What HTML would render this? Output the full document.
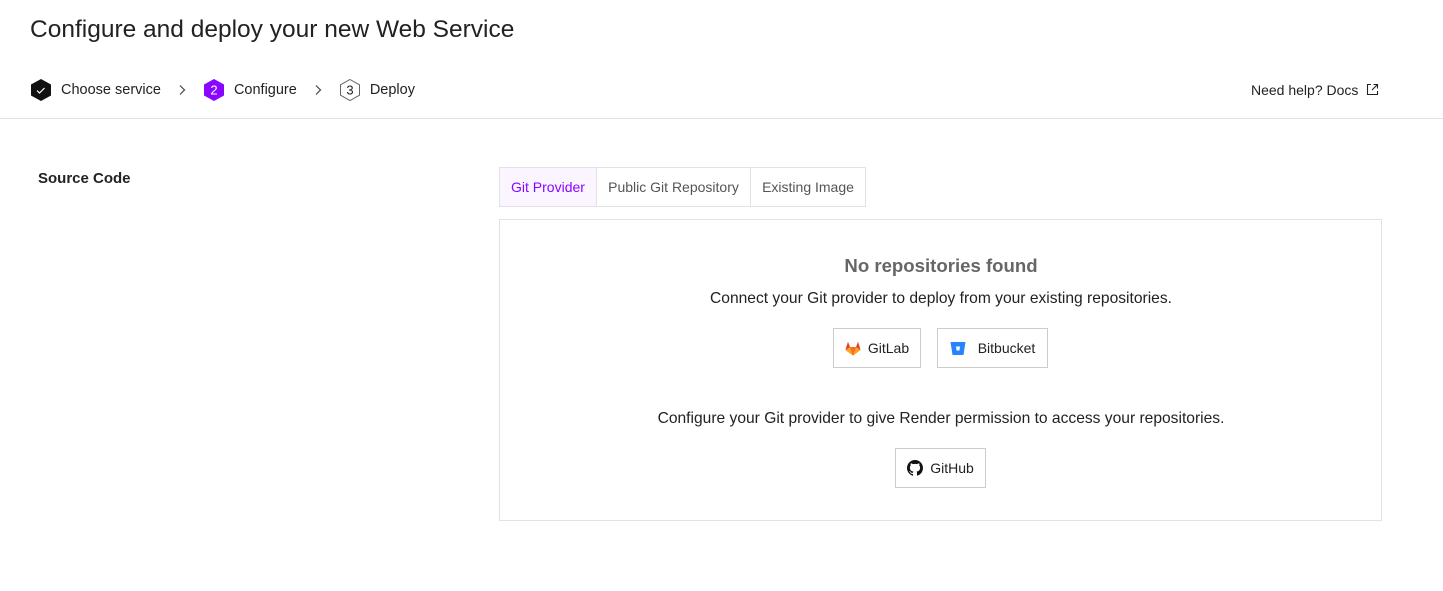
<!DOCTYPE html>
<html><head><meta charset="utf-8"><style>
*{box-sizing:border-box;margin:0;padding:0}
body{width:1443px;height:591px;background:#fff;font-family:"Liberation Sans",sans-serif;color:#1a1a1a;position:relative;overflow:hidden}
.abs{position:absolute}
h1{position:absolute;left:30px;top:16px;font-size:24.5px;font-weight:400;color:#222}
.steps{position:absolute;left:30px;top:78px;height:24px;display:flex;align-items:center;font-size:14.5px;color:#222}
.steps svg{display:block}
.chev{margin:0 17px 0 17px}
.hr{position:absolute;left:0;top:118px;width:1443px;height:1px;background:#e2e2e2}
.tab{position:absolute;top:167px;height:40px;border:1px solid #e2e2e2;font-size:14px;color:#555;display:flex;align-items:center;justify-content:center}
.btn{position:absolute;height:40px;border:1px solid #ccc;display:flex;align-items:center;justify-content:center;font-size:14px;color:#222;gap:7px;background:#fff}
.c{position:absolute;left:500px;width:882px;text-align:center}
</style></head><body>
<h1>Configure and deploy your new Web Service</h1>
<div class="steps">
<svg width="22" height="24" viewBox="0 0 22 24"><polygon points="11,1 21,6.5 21,17.5 11,23 1,17.5 1,6.5" fill="#111"/><path d="M7 12.5l2.5 2.5 5-5" stroke="#fff" stroke-width="1.2" fill="none"/></svg>
<span style="margin-left:9px">Choose service</span>
<svg class="chev" width="8" height="12" viewBox="0 0 8 12"><path d="M2 1.5l4.5 4.5L2 10.5" fill="none" stroke="#444" stroke-width="1.2"/></svg>
<svg width="22" height="24" viewBox="0 0 22 24"><polygon points="11,1 21,6.5 21,17.5 11,23 1,17.5 1,6.5" fill="#8a05ff"/><text x="11" y="16.5" font-size="13" fill="#fff" text-anchor="middle" font-family="Liberation Sans">2</text></svg>
<span style="margin-left:9px">Configure</span>
<svg class="chev" width="8" height="12" viewBox="0 0 8 12"><path d="M2 1.5l4.5 4.5L2 10.5" fill="none" stroke="#444" stroke-width="1.2"/></svg>
<svg width="22" height="24" viewBox="0 0 22 24"><polygon points="11,1.5 20.5,6.8 20.5,17.2 11,22.5 1.5,17.2 1.5,6.8" fill="none" stroke="#666" stroke-width="1"/><text x="11" y="16.5" font-size="13" fill="#222" text-anchor="middle" font-family="Liberation Sans">3</text></svg>
<span style="margin-left:9px">Deploy</span>
</div>
<div class="abs" style="left:1251px;top:82px;font-size:14px;color:#222">Need help? Docs <svg width="13" height="13" viewBox="0 0 13 13" style="margin-left:4px;vertical-align:-1px"><path d="M5 1.5H1.5v10h10V8M7.5 1.5h4v4M11.5 1.5L6 7" fill="none" stroke="#222" stroke-width="1.1"/></svg></div>
<div class="hr"></div>
<div class="abs" style="left:38px;top:170px;font-size:15px;font-weight:700;color:#222">Source Code</div>
<div class="tab" style="left:499px;width:98px;background:#faf5ff;color:#8a05ff">Git Provider</div>
<div class="tab" style="left:596px;width:155px">Public Git Repository</div>
<div class="tab" style="left:750px;width:116px">Existing Image</div>
<div class="abs" style="left:499px;top:219px;width:883px;height:302px;border:1px solid #e2e2e2"></div>
<div class="c" style="top:255px;font-size:18.6px;font-weight:700;color:#666">No repositories found</div>
<div class="c" style="top:290px;font-size:15.6px;color:#222">Connect your Git provider to deploy from your existing repositories.</div>
<div class="btn" style="left:833px;top:328px;width:88px"><svg width="16" height="15" viewBox="0 0 16 15"><path d="M8 14.5L0.5 9 1.3 6 3 .8 5 6h6l2-5.2 1.7 5.2.8 3z" fill="#e24329"/><path d="M8 14.5L5 6h6z" fill="#fc6d26"/><path d="M0.5 9L5 6 8 14.5zM15.5 9L11 6 8 14.5z" fill="#fca326"/></svg>GitLab</div>
<div class="btn" style="left:937px;top:328px;width:111px"><svg width="16" height="15" viewBox="0 0 16 15" style="margin-right:5px"><path d="M0.5 1h15l-2 13h-11z" fill="#2684ff"/><path d="M6 5.5h4l-.6 4H6.6z" fill="#fff"/></svg>Bitbucket</div>
<div class="c" style="top:410px;font-size:15.6px;color:#222">Configure your Git provider to give Render permission to access your repositories.</div>
<div class="btn" style="left:895px;top:448px;width:91px"><svg width="16" height="16" viewBox="0 0 16 16"><path fill="#111" d="M8 0C3.58 0 0 3.58 0 8c0 3.54 2.29 6.53 5.47 7.59.4.07.55-.17.55-.38v-1.33c-2.23.48-2.7-1.07-2.7-1.07-.36-.92-.89-1.17-.89-1.17-.73-.5.06-.49.06-.49.8.06 1.23.83 1.23.83.72 1.22 1.87.87 2.33.66.07-.52.28-.87.5-1.07-1.78-.2-3.65-.89-3.650-3.95 0-.87.31-1.59.82-2.15-.08-.2-.36-1.02.08-2.12 0 0 .67-.21 2.2.82.64-.18 1.32-.27 2-.27.68 0 1.36.09 2 .27 1.53-1.04 2.2-.82 2.2-.82.44 1.1.16 1.920.08 2.12.51.56.82 1.27.82 2.15 0 3.07-1.87 3.75-3.65 3.95.29.25.54.73.54 1.48v2.2c0 .21.15.46.55.38A8.01 8.01 0 0016 8c0-4.42-3.58-8-8-8z"/></svg>GitHub</div>
</body></html>
